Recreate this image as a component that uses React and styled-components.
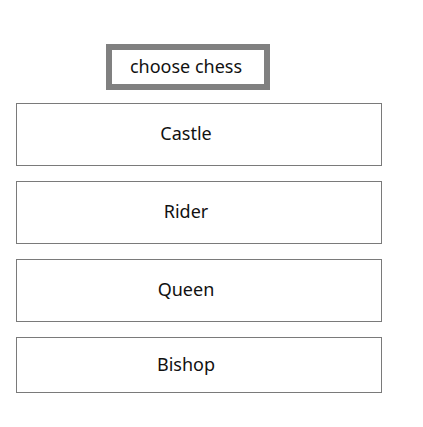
import React from "react";
import styled, { createGlobalStyle } from "styled-components";

const GlobalStyle = createGlobalStyle`
  body {
    margin: 0;
    background: #ffffff;
    font-family: "Noto Sans", "Open Sans", sans-serif;
    color: #111111;
  }
`;

const pieces = ["Castle", "Rider", "Queen", "Bishop"];

function App() {
  return (
    <>
      <GlobalStyle />
      <Page>
        <TitleBox>choose chess</TitleBox>
        <List>
          {pieces.map((p, i) => (
            <Card key={p} $last={i === pieces.length - 1}>
              {p}
            </Card>
          ))}
        </List>
      </Page>
    </>
  );
}

const Page = styled.div`
  padding: 44px 0 0 16px;
  display: flex;
  flex-direction: column;
`;

const TitleBox = styled.div`
  box-sizing: border-box;
  margin-left: 90px;
  width: 164px;
  height: 46px;
  border: 6px solid #808080;
  display: flex;
  align-items: center;
  justify-content: center;
  font-size: 18px;
  padding: 0 4px 2px 0;
  margin-bottom: 13px;
`;

const List = styled.div`
  display: flex;
  flex-direction: column;
  gap: 15px;
`;

const Card = styled.div`
  box-sizing: border-box;
  width: 366px;
  height: ${(props) => (props.$last ? "56px" : "63px")};
  border: 1px solid #7a7a7a;
  display: flex;
  align-items: center;
  justify-content: center;
  padding: 0 26px 3px 0;
  font-size: 18px;
`;

export default App;
